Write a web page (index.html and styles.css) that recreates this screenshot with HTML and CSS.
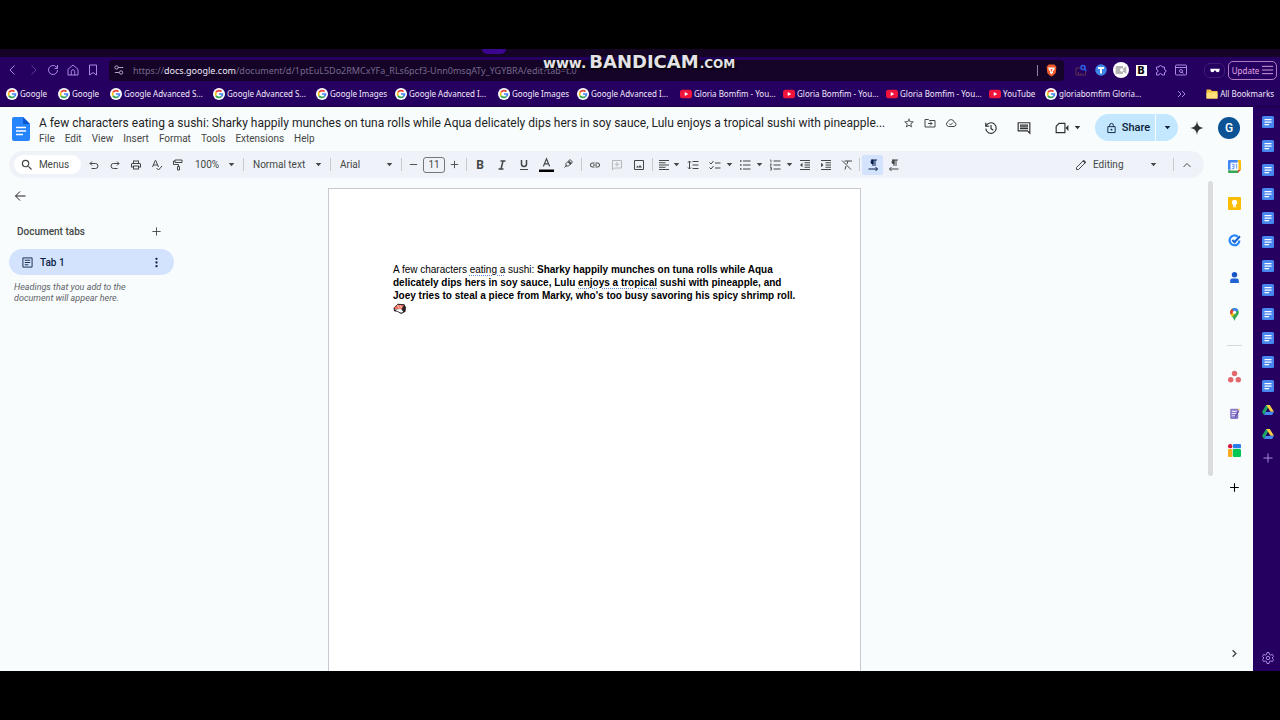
FILE: index.html
```
<!DOCTYPE html>
<html lang="en">
<head>
  <meta charset="UTF-8">
  <meta name="viewport" content="width=device-width, initial-scale=1.0">
  <title>A few characters eating a sushi - Google Docs</title>
  <link rel="stylesheet" href="styles.css">
</head>
<body>
  <!-- shared icons -->
  <svg class="sprite" aria-hidden="true">
    <symbol id="g" viewBox="0 0 24 24">
      <circle cx="12" cy="12" r="12" fill="#fff" stroke="none"/>
      <g fill="none" stroke-width="3.4">
        <path d="M17 7.2A7 7 0 0 0 6 8.6" stroke="#ea4335"/>
        <path d="M6 8.6a7 7 0 0 0 0 6.8" stroke="#fbbc05"/>
        <path d="M6 15.4a7 7 0 0 0 10.6 1.8" stroke="#34a853"/>
        <path d="M12 12h7a7 7 0 0 1-2.4 5.2" stroke="#4285f4"/>
      </g>
    </symbol>
    <symbol id="yt" viewBox="0 0 24 24">
      <rect x="0" y="3.500" width="24" height="17" rx="5" fill="#f0143c"/>
      <path d="M9.500 8v8l7-4z" fill="#fff"/>
    </symbol>
    <symbol id="caret" viewBox="0 0 10 10"><path d="M1 3h8L5 7.500z" fill="currentColor"/></symbol>
    <symbol id="doc" viewBox="0 0 24 24">
      <rect width="24" height="24" rx="3" fill="#4a86f0" stroke="none"/>
      <path d="M5 7h14M5 12h14M5 17h9" stroke="#fff" stroke-width="2.500"/>
    </symbol>
    <symbol id="drive" viewBox="0 0 24 24">
      <g stroke="none">
        <path d="M8.500 2h7l-8 14L4 22 0 15.500z" fill="#1fa463"/>
        <path d="M8.500 2h7L24 15.500h-7z" fill="#fdd041"/>
        <path d="M7.500 15.500H24L20 22H4z" fill="#4688f4"/>
        <path d="M12 8.500l4 7H8z" fill="#250060"/>
      </g>
    </symbol>
    <symbol id="plus" viewBox="0 0 24 24"><path d="M12 3v18M3 12h18" stroke="currentColor" stroke-width="2" fill="none"/></symbol>
  </svg>

  <div class="browser">
    <div class="tab-strip"><span class="active-tab"></span></div>

    <header class="navbar">
      <button class="nav-btn" aria-label="Back"><svg viewBox="0 0 24 24"><path d="M15 3l-9 9 9 9"/></svg></button>
      <button class="nav-btn dim" aria-label="Forward"><svg viewBox="0 0 24 24"><path d="M9 3l9 9-9 9"/></svg></button>
      <button class="nav-btn" aria-label="Reload"><svg viewBox="0 0 24 24"><path d="M21 12a9 9 0 1 1-3-6.700L21 8M21 2v7h-6"/></svg></button>
      <button class="nav-btn" aria-label="Home"><svg viewBox="0 0 24 24"><path d="M2 10.500L12 2l10 8.500V22H2zM8.500 22v-7a3.500 3.500 0 0 1 7 0v7"/></svg></button>
      <button class="nav-btn" aria-label="Bookmark"><svg viewBox="0 0 24 24"><path d="M5 2h14v20l-7-5-7 5z"/></svg></button>
      <div class="url-bar">
        <svg class="site-icon" viewBox="0 0 24 24"><path d="M10 6h12M2 18h10"/><circle cx="6" cy="6" r="4"/><circle cx="17" cy="18" r="4"/></svg>
        <div class="url" role="textbox" aria-label="Address">https://<b>docs.google.com</b>/document/d/1ptEuL5Do2RMCxYFa_RLs6pcf3-Unn0msqATy_YGYBRA/edit?tab=t.0</div>
        <span class="url-line"></span>
        <svg class="shield" viewBox="0 0 24 24">
          <path d="M7 1h10l4 4-1 10c0 3-5 6-8 8-3-2-8-5-8-8L3 5z" fill="#f15a29"/>
          <path d="M6 6l4 1 2-1 2 1 4-1-1 5-3 3 1 2-3 3-3-3 1-2-3-3z" fill="#fff"/>
          <path d="M10 9h4l-2 6z" fill="#f15a29"/>
        </svg>
      </div>
      <div class="extensions">
        <button class="ext" aria-label="Page analyzer"><svg viewBox="0 0 24 24"><path d="M2 8v14h19v-8M2 8h8M7 22v-6M12 22v-4" stroke="#5f3050"/><circle cx="16" cy="7" r="4" stroke="#2d62e8" stroke-width="3"/><path d="M19 10l4 4" stroke="#2d62e8" stroke-width="3"/></svg></button>
        <button class="ext" aria-label="Translate"><svg viewBox="0 0 24 24"><circle cx="12" cy="12" r="11.500" fill="#3d86e8" stroke="none"/><path d="M6 8h12M12 8v11" stroke="#fff" stroke-width="4"/></svg></button>
        <button class="ext big" aria-label="Recorder"><svg viewBox="0 0 24 24"><circle cx="12" cy="12" r="12" fill="#fff" stroke="none"/><path d="M5 7h9v10H5zM14 12l5-4v8z" fill="#b5b5b5" stroke="#b5b5b5"/><circle cx="13" cy="12" r="2.500" fill="#fff" stroke="none"/></svg></button>
        <button class="ext" aria-label="Bold"><span class="b-box">B</span></button>
        <button class="ext" aria-label="Extensions"><svg viewBox="0 0 24 24"><path d="M3 6h5a3 3 0 1 1 6 0h5v5a3 3 0 1 1 0 6v5h-5a3 3 0 1 0-6 0H3v-5a3 3 0 1 0 0-6z"/></svg></button>
        <button class="ext" aria-label="Search tabs"><svg viewBox="0 0 24 24"><rect x="1" y="2" width="22" height="20" rx="2"/><path d="M1 7h22M14 16l3 3"/><circle cx="12" cy="14" r="3"/></svg></button>
        <button class="private" aria-label="Private window"><svg viewBox="0 0 24 12"><path d="M1 2h22v2c0 4-2 6-5 6-2 0-4-2-5-4h-2c-1 2-3 4-5 4-3 0-5-2-5-6z" fill="#fff"/></svg></button>
        <button class="update">Update <svg viewBox="0 0 12 10"><path d="M0 1h12M0 5h12M0 9h12"/></svg></button>
      </div>
    </header>

    <nav class="bookmarks">
      <a href="#" class="short"><svg><use href="#g"/></svg>Google</a>
      <a href="#" class="short"><svg><use href="#g"/></svg>Google</a>
      <a href="#" class="wide"><svg><use href="#g"/></svg>Google Advanced S...</a>
      <a href="#" class="wide"><svg><use href="#g"/></svg>Google Advanced S...</a>
      <a href="#" class="mid"><svg><use href="#g"/></svg>Google Images</a>
      <a href="#" class="wide"><svg><use href="#g"/></svg>Google Advanced I...</a>
      <a href="#" class="mid"><svg><use href="#g"/></svg>Google Images</a>
      <a href="#" class="wide"><svg><use href="#g"/></svg>Google Advanced I...</a>
      <a href="#" class="wide"><svg><use href="#yt"/></svg>Gloria Bomfim - You...</a>
      <a href="#" class="wide"><svg><use href="#yt"/></svg>Gloria Bomfim - You...</a>
      <a href="#" class="wide"><svg><use href="#yt"/></svg>Gloria Bomfim - You...</a>
      <a href="#" class="short yt"><svg><use href="#yt"/></svg>YouTube</a>
      <a href="#" class="wide"><svg><use href="#g"/></svg>gloriabomfim Gloria...</a>
      <button class="more-marks" aria-label="More bookmarks"><svg viewBox="0 0 12 12"><path d="M2 3l3 3-3 3M6 3l3 3-3 3"/></svg></button>
      <a href="#" class="all"><svg viewBox="0 0 24 24"><path d="M1 3h8l3 3h11v15H1z" fill="#f5c342"/><path d="M1 9h22v12H1z" fill="#ffe07a"/></svg>All Bookmarks</a>
    </nav>

    <div class="window">
      <div class="docs">
        <div class="doc-header">
          <svg class="logo" viewBox="0 0 18 24">
            <path d="M2 0h9l7 7v15a2 2 0 0 1-2 2H2a2 2 0 0 1-2-2V2a2 2 0 0 1 2-2z" fill="#2684fc"/>
            <path d="M11 0l7 7h-7z" fill="#0b57d0"/>
            <path d="M4 10.500h10M4 14h10M4 17.500h7" stroke="#fff" stroke-width="1.500"/>
          </svg>
          <div class="heading">
            <div class="title-row">
              <input class="title" aria-label="Document title" value="A few characters eating a sushi: Sharky happily munches on tuna rolls while Aqua delicately dips hers in soy sauce, Lulu enjoys a tropical sushi with pineapple...">
              <button class="small-icon" aria-label="Star"><svg viewBox="0 0 24 24"><path class="fill" d="M22 9.240l-7.190-.620L12 2 9.190 8.630 2 9.240l5.460 4.730L5.820 21 12 17.270 18.180 21l-1.630-7.030L22 9.240zM12 15.400l-3.760 2.270 1-4.280-3.320-2.880 4.380-.380L12 6.100l1.710 4.040 4.380.380-3.320 2.880 1 4.280L12 15.400z"/></svg></button>
              <button class="small-icon" aria-label="Move"><svg viewBox="0 0 24 24"><path d="M2 5h7l2 2h11v13H2zM8 13h8M12 9l4 4-4 4"/></svg></button>
              <button class="small-icon" aria-label="Saved to Drive"><svg viewBox="0 0 24 24"><path d="M7 19a5 5 0 0 1-1-9.500 6.500 6.500 0 0 1 12.500 1A4.300 4.300 0 0 1 18 19zM8.500 13.500l2.500 2.500 4.500-4.500"/></svg></button>
            </div>
            <nav class="menus">
              <button>File</button>
              <button>Edit</button>
              <button>View</button>
              <button>Insert</button>
              <button>Format</button>
              <button>Tools</button>
              <button>Extensions</button>
              <button>Help</button>
            </nav>
          </div>
          <div class="actions">
            <button class="action" aria-label="Version history"><svg viewBox="0 0 24 24"><path d="M3 3v6h6M3.500 9A9 9 0 1 1 3 13M12 7v6l4 3"/></svg></button>
            <button class="action" aria-label="Comments"><svg viewBox="0 0 24 24"><path d="M2 3h20v18l-4-4H2zM5 7h14M5 10h14M5 13h14"/></svg></button>
            <button class="action meet" aria-label="Meet"><svg viewBox="0 0 24 24"><path d="M7 4h10v16H2V9z"/><path d="M18 12l5-5v10z" fill="currentColor" stroke="none"/></svg><svg class="caret"><use href="#caret"/></svg></button>
            <div class="share">
              <button class="share-main"><svg viewBox="0 0 24 24"><path d="M4 9h16v13H4zM8 9V6a4 4 0 0 1 8 0v3"/><circle cx="12" cy="15.500" r="2" fill="currentColor" stroke="none"/></svg>Share</button>
              <button class="share-more" aria-label="Share options"><svg class="caret"><use href="#caret"/></svg></button>
            </div>
            <button class="spark" aria-label="Gemini"><svg viewBox="0 0 24 24"><path d="M12 0c1 8 4 11 12 12-8 1-11 4-12 12-1-8-4-11-12-12 8-1 11-4 12-12z" fill="#303134"/></svg></button>
            <button class="avatar" aria-label="Account">G</button>
          </div>
        </div>

        <div class="below">
          <div class="editor">
            <div class="toolbar">
              <button class="menus-search"><svg viewBox="0 0 24 24"><path class="fill" d="M15.500 14h-.790l-.280-.270A6.471 6.471 0 0 0 16 9.500 6.500 6.500 0 1 0 9.500 16c1.610 0 3.090-.590 4.230-1.570l.270.280v.790l5 4.990L20.490 19l-4.990-5zm-6 0C7.010 14 5 11.990 5 9.500S7.010 5 9.500 5 14 7.010 14 9.500 11.990 14 9.500 14z"/></svg>Menus</button>
              <button class="tool" aria-label="Undo"><svg viewBox="0 0 24 24"><path d="M8 5L4 9l4 4M4 9h11a5 5 0 0 1 0 10H7"/></svg></button>
              <button class="tool" aria-label="Redo"><svg viewBox="0 0 24 24"><path d="M16 5l4 4-4 4M20 9H9a5 5 0 0 0 0 10h8"/></svg></button>
              <button class="tool" aria-label="Print"><svg viewBox="0 0 24 24"><path class="fill" d="M19 8h-1V3H6v5H5c-1.660 0-3 1.340-3 3v6h4v4h12v-4h4v-6c0-1.660-1.340-3-3-3zM8 5h8v3H8V5zm8 12v2H8v-4h8v2zm2-2v-2H6v2H4v-4c0-.550.450-1 1-1h14c.550 0 1 .450 1 1v4h-2z"/></svg></button>
              <button class="tool" aria-label="Spelling"><svg viewBox="0 0 24 24"><path d="M3 16L8.500 3h1L15 16M5 12h8M11 18l4 4 7-8"/></svg></button>
              <button class="tool" aria-label="Paint format"><svg viewBox="0 0 24 24"><path d="M6 2h14v5H6zM6 4H3v7h10v4M11 15h4v7h-4z"/></svg></button>
              <div class="pick">
                <select class="zoom" aria-label="Zoom"><option>100%</option></select>
                <svg class="caret"><use href="#caret"/></svg>
              </div>
              <span class="sep"></span>
              <div class="pick">
                <select class="style" aria-label="Styles"><option>Normal text</option></select>
                <svg class="caret"><use href="#caret"/></svg>
              </div>
              <span class="sep"></span>
              <div class="pick">
                <select class="font" aria-label="Font"><option>Arial</option></select>
                <svg class="caret"><use href="#caret"/></svg>
              </div>
              <span class="sep"></span>
              <button class="step" aria-label="Decrease font size"><svg viewBox="0 0 24 24"><path d="M4 12h16"/></svg></button>
              <input class="size" aria-label="Font size" value="11">
              <button class="step" aria-label="Increase font size"><svg viewBox="0 0 24 24"><path d="M12 4v16M4 12h16"/></svg></button>
              <span class="sep"></span>
              <button class="tool mark bold" aria-label="Bold">B</button>
              <button class="tool mark" aria-label="Italic"><svg viewBox="0 0 24 24"><path d="M9 4h10M5 20h10M14 4l-4 16" stroke-width="3"/></svg></button>
              <button class="tool mark" aria-label="Underline"><svg viewBox="0 0 24 24"><path d="M7 2v8a5 5 0 0 0 10 0V2" stroke-width="3"/><path d="M4 21h16"/></svg></button>
              <button class="tool mark" aria-label="Text color"><svg class="color" viewBox="0 0 24 24"><path d="M7 15l5-12 5 12M8.500 11h7"/><path d="M0 22h24" stroke="#000" stroke-width="4"/></svg></button>
              <button class="tool mark" aria-label="Highlight color"><svg viewBox="0 0 24 24"><path d="M8 9l8-8 5 5-8 8H8zM8 14l-3 3"/><path d="M13 5l5 5" stroke-width="4"/></svg></button>
              <span class="sep"></span>
              <button class="tool mark" aria-label="Link"><svg viewBox="0 0 24 24"><path class="fill" d="M3.900 12c0-1.710 1.390-3.100 3.100-3.100h4V7H7c-2.760 0-5 2.240-5 5s2.240 5 5 5h4v-1.900H7c-1.710 0-3.100-1.390-3.100-3.100zM8 13h8v-2H8v2zm9-6h-4v1.900h4c1.710 0 3.100 1.390 3.100 3.100s-1.390 3.100-3.100 3.100h-4V17h4c2.760 0 5-2.240 5-5s-2.240-5-5-5z"/></svg></button>
              <button class="tool mark off" aria-label="Add comment"><svg viewBox="0 0 24 24"><path d="M3 3h18v15H7l-4 4zM12 6v9M7.500 10.500h9"/></svg></button>
              <button class="tool mark" aria-label="Insert image"><svg viewBox="0 0 24 24"><path d="M3 3h18v18H3z"/><path d="M6 17l3-4 2 3 3-4 4 5z" fill="currentColor" stroke="none"/></svg></button>
              <span class="sep"></span>
              <button class="tool drop tight" aria-label="Align"><svg viewBox="0 0 24 24"><path d="M2 3h20M2 7.500h13M2 12h20M2 16.500h13M2 21h20"/></svg><svg class="caret"><use href="#caret"/></svg></button>
              <button class="tool mark" aria-label="Line spacing"><svg viewBox="0 0 24 24"><path d="M11 5h12M11 12h12M11 19h12M5 4v16M2 7l3-3 3 3M2 17l3 3 3-3"/></svg></button>
              <button class="tool drop" aria-label="Checklist"><svg viewBox="0 0 24 24"><path d="M1 7l3 3 5-6M1 17l3 3 5-6M12 8h11M12 18h11"/></svg><svg class="caret"><use href="#caret"/></svg></button>
              <button class="tool drop" aria-label="Bulleted list"><svg viewBox="0 0 24 24"><path d="M8 4h15M8 12h15M8 20h15"/><path d="M2 4h3M2 12h3M2 20h3" stroke-width="3"/></svg><svg class="caret"><use href="#caret"/></svg></button>
              <button class="tool drop" aria-label="Numbered list"><svg viewBox="0 0 24 24"><path d="M9 4h14M9 12h14M9 20h14"/><path d="M2 2h2v5M2 10h3l-3 4h3M2 17h3v5H2M3 19h2" stroke-width="1.500"/></svg><svg class="caret"><use href="#caret"/></svg></button>
              <button class="tool" aria-label="Decrease indent"><svg viewBox="0 0 24 24"><path d="M2 3h20M11 7.500h11M11 12h11M11 16.500h11M2 21h20"/><path d="M7 7.500v9L2 12z" fill="currentColor" stroke="none"/></svg></button>
              <button class="tool" aria-label="Increase indent"><svg viewBox="0 0 24 24"><path d="M2 3h20M11 7.500h11M11 12h11M11 16.500h11M2 21h20"/><path d="M2 7.500v9L7 12z" fill="currentColor" stroke="none"/></svg></button>
              <button class="tool" aria-label="Clear formatting"><svg viewBox="0 0 24 24"><path d="M7 4h15M14 4l-2 6M10 14l-2 7M2 3l18 18"/></svg></button>
              <span class="sep"></span>
              <button class="tool selected" aria-label="Left to right"><svg viewBox="0 0 24 24"><path d="M8 2h12M12 2v12M16 2v12M3 20h18M17 16l4 4-4 4"/><path d="M12 2a4 4 0 0 0 0 8z" fill="currentColor"/></svg></button>
              <button class="tool" aria-label="Right to left"><svg viewBox="0 0 24 24"><path d="M8 2h12M12 2v12M16 2v12M3 20h18M7 16l-4 4 4 4"/><path d="M12 2a4 4 0 0 0 0 8z" fill="currentColor"/></svg></button>
              <div class="pick mode-pick">
                <svg viewBox="0 0 24 24"><path d="M3 21v-4L16 4l4 4L7 21z"/><path d="M15 3l6 6 1-3-4-4z" fill="currentColor" stroke="none"/></svg>
                <select class="mode" aria-label="Mode"><option>Editing</option></select>
                <svg class="caret"><use href="#caret"/></svg>
              </div>
              <span class="sep"></span>
              <button class="tool" aria-label="Hide menus"><svg viewBox="0 0 24 24"><path d="M5 16l7-7 7 7"/></svg></button>
            </div>

            <div class="workspace">
              <div class="canvas">
                <aside class="outline">
                  <button class="back" aria-label="Close tabs"><svg viewBox="0 0 24 24"><path d="M12 3l-9 9 9 9M3 12h20"/></svg></button>
                  <div class="outline-head">
                    <h2>Document tabs</h2>
                    <button aria-label="Add tab"><svg><use href="#plus"/></svg></button>
                  </div>
                  <div class="tab">
                    <svg viewBox="0 0 24 24"><path d="M2 2h20v20H2zM6 7h12M6 12h12M6 17h8"/></svg>
                    <span>Tab 1</span>
                    <button aria-label="Tab options"><svg viewBox="0 0 24 24"><circle cx="12" cy="4" r="2.500"/><circle cx="12" cy="12" r="2.500"/><circle cx="12" cy="20" r="2.500"/></svg></button>
                  </div>
                  <p>Headings that you add to the document will appear here.</p>
                </aside>
                <main class="page">
                  <p>A few characters <u>eating a</u> sushi: <b>Sharky happily munches on tuna rolls while Aqua<br>
                  delicately dips hers in soy sauce, Lulu <u>enjoys a tropical</u> sushi with pineapple, and<br>
                  Joey tries to steal a piece from Marky, who's too busy savoring his spicy shrimp roll.</b><br>
                  <svg class="sushi" viewBox="0 0 24 20"><path d="M1 9l8-8 12 1 3 6-1 8-8 4-7-4-6-1z" fill="#2b2023"/><path d="M3 12l12-1 4 5-4 2-8-4z" fill="#fff"/><path d="M2 9l7-6 11 1-4 7-12 0z" fill="#f07060"/><path d="M8 4l4 6M13 4l3 5" stroke="#ffc2b4"/></svg></p>
                </main>
              </div>
              <div class="scrollbar"></div>
            </div>
          </div>

          <aside class="side-panel">
            <button aria-label="Calendar"><svg viewBox="0 0 24 24"><path d="M0 2a2 2 0 0 1 2-2h16v5H5v13H0z" fill="#4285f4"/><path d="M18 0h4a2 2 0 0 1 2 2v16h-5V5z" fill="#fbbc04"/><path d="M0 19h19v5H2a2 2 0 0 1-2-2z" fill="#34a853"/><path d="M24 18l-6 6v-6z" fill="#ea4335"/><path d="M5 5h14v14H5z" fill="#fff"/><path d="M7 8h4v8H7M8 12h3M14 9l2-1v8" fill="none" stroke="#4285f4" stroke-width="1.500"/></svg></button>
            <button aria-label="Keep"><svg viewBox="0 0 24 24"><rect width="24" height="24" rx="2" fill="#fbbc04"/><path d="M12 5a5 5 0 0 1 3 9v2H9v-2a5 5 0 0 1 3-9zM9 17h6v2H9z" fill="#fff"/></svg></button>
            <button aria-label="Tasks"><svg viewBox="0 0 24 24"><path d="M18 5a9 9 0 1 0 3 7" fill="none" stroke="#2684fc" stroke-width="4"/><path d="M8 11l4 4L22 4" fill="none" stroke="#1967d2" stroke-width="4"/></svg></button>
            <button aria-label="Contacts"><svg viewBox="0 0 24 24"><circle cx="12" cy="7" r="5" fill="#1a56c8"/><path d="M4 22v-4a4 4 0 0 1 4-4h8a4 4 0 0 1 4 4v4z" fill="#2062d6"/></svg></button>
            <button aria-label="Maps"><svg viewBox="0 0 24 24"><path d="M12 0a8 8 0 0 1 8 8c0 6-6 8-8 16-2-8-8-10-8-16a8 8 0 0 1 8-8z" fill="#34a853"/><path d="M12 0a8 8 0 0 1 7 4l-7 5-5-7a8 8 0 0 1 5-2z" fill="#4285f4"/><path d="M7 2l5 6-7 4a8 8 0 0 1 2-10z" fill="#ea4335"/><path d="M5 12l7-4v5l-5 3z" fill="#fbbc04"/><circle cx="12" cy="8" r="3" fill="#fff"/></svg></button>
            <hr>
            <button aria-label="Asana"><svg viewBox="0 0 24 24"><g fill="#e2686b"><circle cx="12" cy="6.500" r="5"/><circle cx="5" cy="18" r="5"/><circle cx="19" cy="18" r="5"/></g></svg></button>
            <button aria-label="Notes"><svg viewBox="0 0 24 24"><rect x="4" y="3" width="15" height="19" rx="2" fill="#8a7bc8"/><path d="M7 8h9M7 12h9M7 16h6" stroke="#e8e2ff" stroke-width="2"/><path d="M13 19l7-12" stroke="#5c4da0" stroke-width="2"/><path d="M17 3h4v5" fill="#f2b05e"/></svg></button>
            <button aria-label="Templates"><svg viewBox="0 0 24 24"><circle cx="4" cy="4" r="4" fill="#d8123c"/><rect x="9" width="15" height="8" rx="2" fill="#2b7de9"/><rect y="9" width="8" height="15" rx="2" fill="#f9ab1f"/><rect x="9" y="9" width="15" height="15" rx="2" fill="#00c853"/></svg></button>
            <button aria-label="Get add-ons"><svg viewBox="0 0 24 24"><path d="M12 4v16M4 12h16" stroke="#000" stroke-width="2"/></svg></button>
            <button class="hide" aria-label="Hide side panel"><svg viewBox="0 0 24 24"><path d="M8 5l7 7-7 7" fill="none" stroke="#444746" stroke-width="3"/></svg></button>
          </aside>
        </div>
      </div>

      <aside class="tab-rail">
        <button aria-label="Document"><svg><use href="#doc"/></svg></button>
        <button aria-label="Document"><svg><use href="#doc"/></svg></button>
        <button aria-label="Document"><svg><use href="#doc"/></svg></button>
        <button aria-label="Document"><svg><use href="#doc"/></svg></button>
        <button aria-label="Document"><svg><use href="#doc"/></svg></button>
        <button aria-label="Document"><svg><use href="#doc"/></svg></button>
        <button aria-label="Document"><svg><use href="#doc"/></svg></button>
        <button aria-label="Document"><svg><use href="#doc"/></svg></button>
        <button aria-label="Document"><svg><use href="#doc"/></svg></button>
        <button aria-label="Document"><svg><use href="#doc"/></svg></button>
        <button aria-label="Document"><svg><use href="#doc"/></svg></button>
        <button aria-label="Document"><svg><use href="#doc"/></svg></button>
        <button aria-label="Drive"><svg><use href="#drive"/></svg></button>
        <button aria-label="Drive"><svg><use href="#drive"/></svg></button>
        <button aria-label="Add"><svg><use href="#plus"/></svg></button>
        <button class="settings" aria-label="Settings"><svg viewBox="0 0 24 24"><path d="M10 1h4l1 4 2 1 4-1 2 4-3 3 3 3-2 4-4-1-2 1-1 4h-4l-1-4-2-1-4 1-2-4 3-3-3-3 2-4 4 1 2-1z"/><circle cx="12" cy="12" r="3.500"/></svg></button>
      </aside>
    </div>
  </div>

  <div class="watermark"><span>www.</span><b>BANDICAM</b><small>.COM</small></div>
</body>
</html>
```
FILE: styles.css
```
* {
  box-sizing: border-box;
}
body {
  margin: 0;
  min-height: 100vh;
  padding: 49px 0;
  display: flex;
  flex-direction: column;
  background: #000;
  font-family: Roboto, Inter, sans-serif;
  font-size: 10px;
  color: #444746;
}
button, input, select {
  font: inherit;
  color: inherit;
  margin: 0;
  padding: 0;
  border: 0;
  background: none;
  appearance: none;
}
button {
  display: flex;
  align-items: center;
  justify-content: center;
  flex: none;
  cursor: pointer;
}
svg {
  display: block;
  flex: none;
  fill: none;
  stroke: currentColor;
  stroke-width: 2;
}
.fill {
  fill: currentColor;
  stroke: none;
}
.sprite {
  display: none;
}
.browser {
  flex: 1;
  display: flex;
  flex-direction: column;
  background: #250060;
}

/* browser chrome */
.tab-strip {
  height: 8px;
  padding-left: 482px;
  background: #160427;
}
.active-tab {
  display: block;
  width: 24px;
  height: 5px;
  border-radius: 0 0 5px 5px;
  background: #3b058f;
}
.navbar {
  display: flex;
  align-items: center;
  height: 26px;
  padding: 0 3px;
  color: #a98be0;
}
.nav-btn {
  width: 20px;
  height: 20px;
}
.nav-btn svg {
  width: 12px;
  height: 12px;
}
.dim {
  color: #5c3d96;
}
.url-bar {
  flex: 1;
  display: flex;
  align-items: center;
  height: 21px;
  margin: 0 7px 0 6px;
  padding: 0 6px 0 5px;
  border-radius: 4px;
  background: #150427;
  font-family: "Noto Sans", sans-serif;
  font-size: 9px;
  color: #76698c;
}
.site-icon {
  width: 10px;
  height: 10px;
  margin-right: 9px;
  color: #cfc4e4;
}
.url {
  flex: 1;
  white-space: nowrap;
}
.url b {
  font-weight: 400;
  color: #efe9fa;
}
.url-line {
  width: 1px;
  height: 11px;
  margin-right: 7px;
  background: #8d83a0;
}
.shield {
  width: 13px;
  height: 13px;
  stroke: none;
}
.extensions {
  display: flex;
  align-items: center;
}
.ext {
  width: 20px;
  height: 20px;
}
.ext svg {
  width: 12px;
  height: 12px;
}
.ext.big svg {
  width: 16px;
  height: 16px;
}
.b-box {
  width: 11px;
  height: 11px;
  background: #fff;
  color: #000;
  font: 700 10px/11px "DejaVu Sans", sans-serif;
}
.private {
  width: 21px;
  height: 15px;
  margin: 0 3px 0 13px;
  border: 1px solid #3d1a78;
  border-radius: 6px;
}
.private svg {
  width: 10px;
  height: 5px;
  stroke: none;
}
.update {
  gap: 3px;
  width: 49px;
  height: 19px;
  border: 1px solid #b07bc4;
  border-radius: 5px;
  color: #e3a8e4;
  font-family: "Noto Sans", sans-serif;
  font-size: 8px;
}
.update svg {
  width: 11px;
  height: 10px;
  stroke-width: 1;
}
.bookmarks {
  display: flex;
  align-items: center;
  height: 23px;
  padding: 0 6px 2px;
  font-family: "Noto Sans", sans-serif;
  font-size: 8px;
  white-space: nowrap;
}
.bookmarks a {
  display: flex;
  align-items: center;
  gap: 2px;
  color: #f1eafc;
  text-decoration: none;
}
.bookmarks a svg {
  width: 12px;
  height: 12px;
  stroke: none;
}
.bookmarks .short {
  width: 52px;
}
.bookmarks .yt {
  width: 56px;
}
.bookmarks .mid {
  width: 79px;
}
.bookmarks .wide {
  width: 103px;
}
.more-marks {
  margin-left: auto;
  margin-right: 18px;
  color: #a98be0;
}
.more-marks svg {
  width: 12px;
  height: 12px;
  stroke-width: 1;
}

/* docs */
.window {
  flex: 1;
  display: flex;
  border-top: 1px solid #1a0040;
}
.docs {
  flex: 1;
  min-width: 0;
  display: flex;
  flex-direction: column;
  background: #f8fcfd;
}
.doc-header {
  display: flex;
  align-items: flex-start;
  height: 44px;
  padding: 7px 13px 0 12px;
}
.logo {
  width: 18px;
  height: 24px;
  margin: 3px 9px 0 0;
  stroke: none;
}
.heading {
  flex: 1;
}
.title-row {
  display: flex;
  align-items: center;
  height: 17px;
}
.title {
  width: 858px;
  margin-right: 1px;
  font-size: 12px;
  color: #1f1f1f;
}
.small-icon {
  width: 21px;
  height: 18px;
}
.small-icon svg {
  width: 12px;
  height: 12px;
}
.menus {
  display: flex;
  gap: 10px;
  height: 14px;
}
.actions {
  display: flex;
  align-items: center;
  height: 27px;
  color: #303134;
}
.action {
  width: 33px;
  height: 27px;
}
.action svg {
  width: 14px;
  height: 14px;
}
.meet {
  width: 55px;
  gap: 5px;
}
.caret, .action .caret {
  width: 7px;
  height: 7px;
  stroke: none;
}
.share {
  display: flex;
  height: 27px;
  border-radius: 14px;
  overflow: hidden;
  background: #c2e7ff;
  color: #0b2238;
  font-size: 11px;
  font-weight: 500;
}
.share-main {
  width: 60px;
  padding-left: 6px;
  gap: 5px;
}
.share-main svg {
  width: 11px;
  height: 12px;
}
.share-more {
  width: 23px;
  border-left: 1px solid #f8fcfd;
}
.spark {
  width: 38px;
}
.spark svg {
  width: 14px;
  height: 14px;
  stroke: none;
}
.avatar {
  width: 22px;
  height: 22px;
  border-radius: 50%;
  margin-left: 2px;
  background: #0b5394;
  color: #fff;
  font-size: 12px;
  font-weight: 500;
}
.below {
  flex: 1;
  display: flex;
}
.editor {
  flex: 1;
  min-width: 0;
  display: flex;
  flex-direction: column;
}
.toolbar {
  display: flex;
  align-items: center;
  height: 27px;
  margin: 0 11px 0 9px;
  padding: 0 7px 0 5px;
  border-radius: 14px;
  background: #eff3f9;
}
.menus-search {
  width: 67px;
  height: 19px;
  margin-right: 2px;
  padding-right: 6px;
  gap: 5px;
  border-radius: 10px;
  background: #fff;
}
.menus-search svg {
  width: 14px;
  height: 14px;
}
.tool {
  width: 21px;
  height: 20px;
}
.tool svg {
  width: 12px;
  height: 12px;
}
.mark {
  width: 22px;
}
.bold {
  font-size: 12px;
  font-weight: 700;
}
.tool .color {
  width: 15px;
  height: 15px;
}
.off {
  color: #b4b8bb;
}
.drop {
  width: 30px;
  justify-content: flex-start;
  padding-left: 5px;
  gap: 5px;
}
.tight {
  width: 27px;
  padding-left: 3px;
  gap: 3px;
}
.tool .caret {
  width: 7px;
  height: 7px;
}
.selected {
  border-radius: 2px;
  background: #d3e3fd;
  color: #041e49;
}
.step {
  width: 19px;
  height: 20px;
}
.step svg {
  width: 11px;
  height: 11px;
}
.size {
  width: 22px;
  height: 16px;
  border: 1px solid #747775;
  border-radius: 3px;
  text-align: center;
}
.sep {
  width: 1px;
  height: 13px;
  margin: 0 2px;
  background: #c7cacd;
}
.pick {
  display: flex;
  align-items: center;
  padding: 0 6px 0 7px;
}
.pick .caret {
  margin-left: 4px;
}
.zoom {
  width: 29px;
}
.style {
  width: 58px;
}
.font {
  width: 42px;
}
.mode-pick {
  margin-left: auto;
  padding-right: 14px;
}
.mode-pick svg:first-child {
  width: 12px;
  height: 12px;
  margin-right: 6px;
}
.mode {
  width: 53px;
}
.workspace {
  flex: 1;
  display: flex;
  padding-top: 3px;
}
.canvas {
  flex: 1;
  min-width: 0;
  display: grid;
  grid-template-columns: 1fr 533px 1fr;
  padding-top: 7px;
}
.scrollbar {
  width: 5px;
  height: 295px;
  margin: 0 2px 0 19px;
  border-radius: 3px;
  background: #dadcde;
}
.outline {
  padding: 1px 0 0 9px;
}
.back {
  margin-left: 5px;
  color: #1f1f1f;
}
.back svg {
  width: 12px;
  height: 14px;
}
.outline-head {
  display: flex;
  align-items: center;
  justify-content: space-between;
  width: 165px;
  height: 20px;
  margin-top: 18px;
  padding: 0 12px 0 8px;
}
.outline h2 {
  margin: 0;
  font-size: 10px;
  font-weight: 500;
}
.outline-head svg {
  width: 11px;
  height: 11px;
}
.tab {
  display: flex;
  align-items: center;
  width: 165px;
  height: 26px;
  margin-top: 8px;
  padding: 0 12px 0 13px;
  border-radius: 13px;
  background: #d3e3fd;
  color: #0b2345;
  font-weight: 500;
}
.tab svg {
  width: 11px;
  height: 11px;
}
.tab span {
  flex: 1;
  margin-left: 7px;
}
.tab button svg {
  fill: currentColor;
  stroke: none;
}
.outline p {
  width: 130px;
  margin: 7px 0 0 5px;
  font-size: 9px;
  font-style: italic;
  line-height: 11px;
  color: #5f6368;
}
.page {
  border: 1px solid #c7cbd1;
  border-bottom: 0;
  padding: 74px 0 0 64px;
  background: #fff;
  color: #000;
  font-family: "Liberation Sans", Arial, sans-serif;
  font-size: 10px;
  line-height: 13px;
  white-space: nowrap;
}
.page p {
  margin: 0;
}
.page u {
  text-decoration: underline dotted #5f86d6;
  text-underline-offset: 2px;
}
.sushi {
  width: 13px;
  height: 11px;
  margin-top: 1px;
  stroke: none;
}

/* add-on panel */
.side-panel {
  display: flex;
  flex-direction: column;
  align-items: center;
  width: 38px;
  padding: 0 0 8px;
}
.side-panel button {
  width: 38px;
  height: 37px;
}
.side-panel button:first-child {
  height: 30px;
  margin-bottom: 4px;
}
.side-panel svg {
  width: 13px;
  height: 13px;
  stroke: none;
}
.side-panel hr {
  width: 15px;
  height: 1px;
  margin: 12px 0;
  border: 0;
  background: #d5d8da;
}
.side-panel .hide {
  height: 20px;
  margin-top: auto;
}
.side-panel .hide svg {
  width: 11px;
  height: 11px;
}

/* vertical tabs of the browser */
.tab-rail {
  display: flex;
  flex-direction: column;
  align-items: center;
  width: 27px;
  padding: 3px 0 3px 3px;
  color: #a98be0;
}
.tab-rail button {
  height: 24px;
}
.tab-rail svg {
  width: 12px;
  height: 12px;
}
.tab-rail .settings {
  height: 20px;
  margin-top: auto;
}
.watermark {
  position: absolute;
  top: 53px;
  left: 543px;
  display: flex;
  align-items: baseline;
  font-family: "DejaVu Sans", sans-serif;
  font-weight: 700;
  font-size: 14px;
  line-height: 18px;
  color: #e4e2e6;
  text-shadow: 0 0 2px #000, 1px 1px 2px #000;
}
.watermark b {
  margin: 0 1px 0 3px;
  font-size: 18px;
}
.watermark small {
  font-size: 12px;
}
```
